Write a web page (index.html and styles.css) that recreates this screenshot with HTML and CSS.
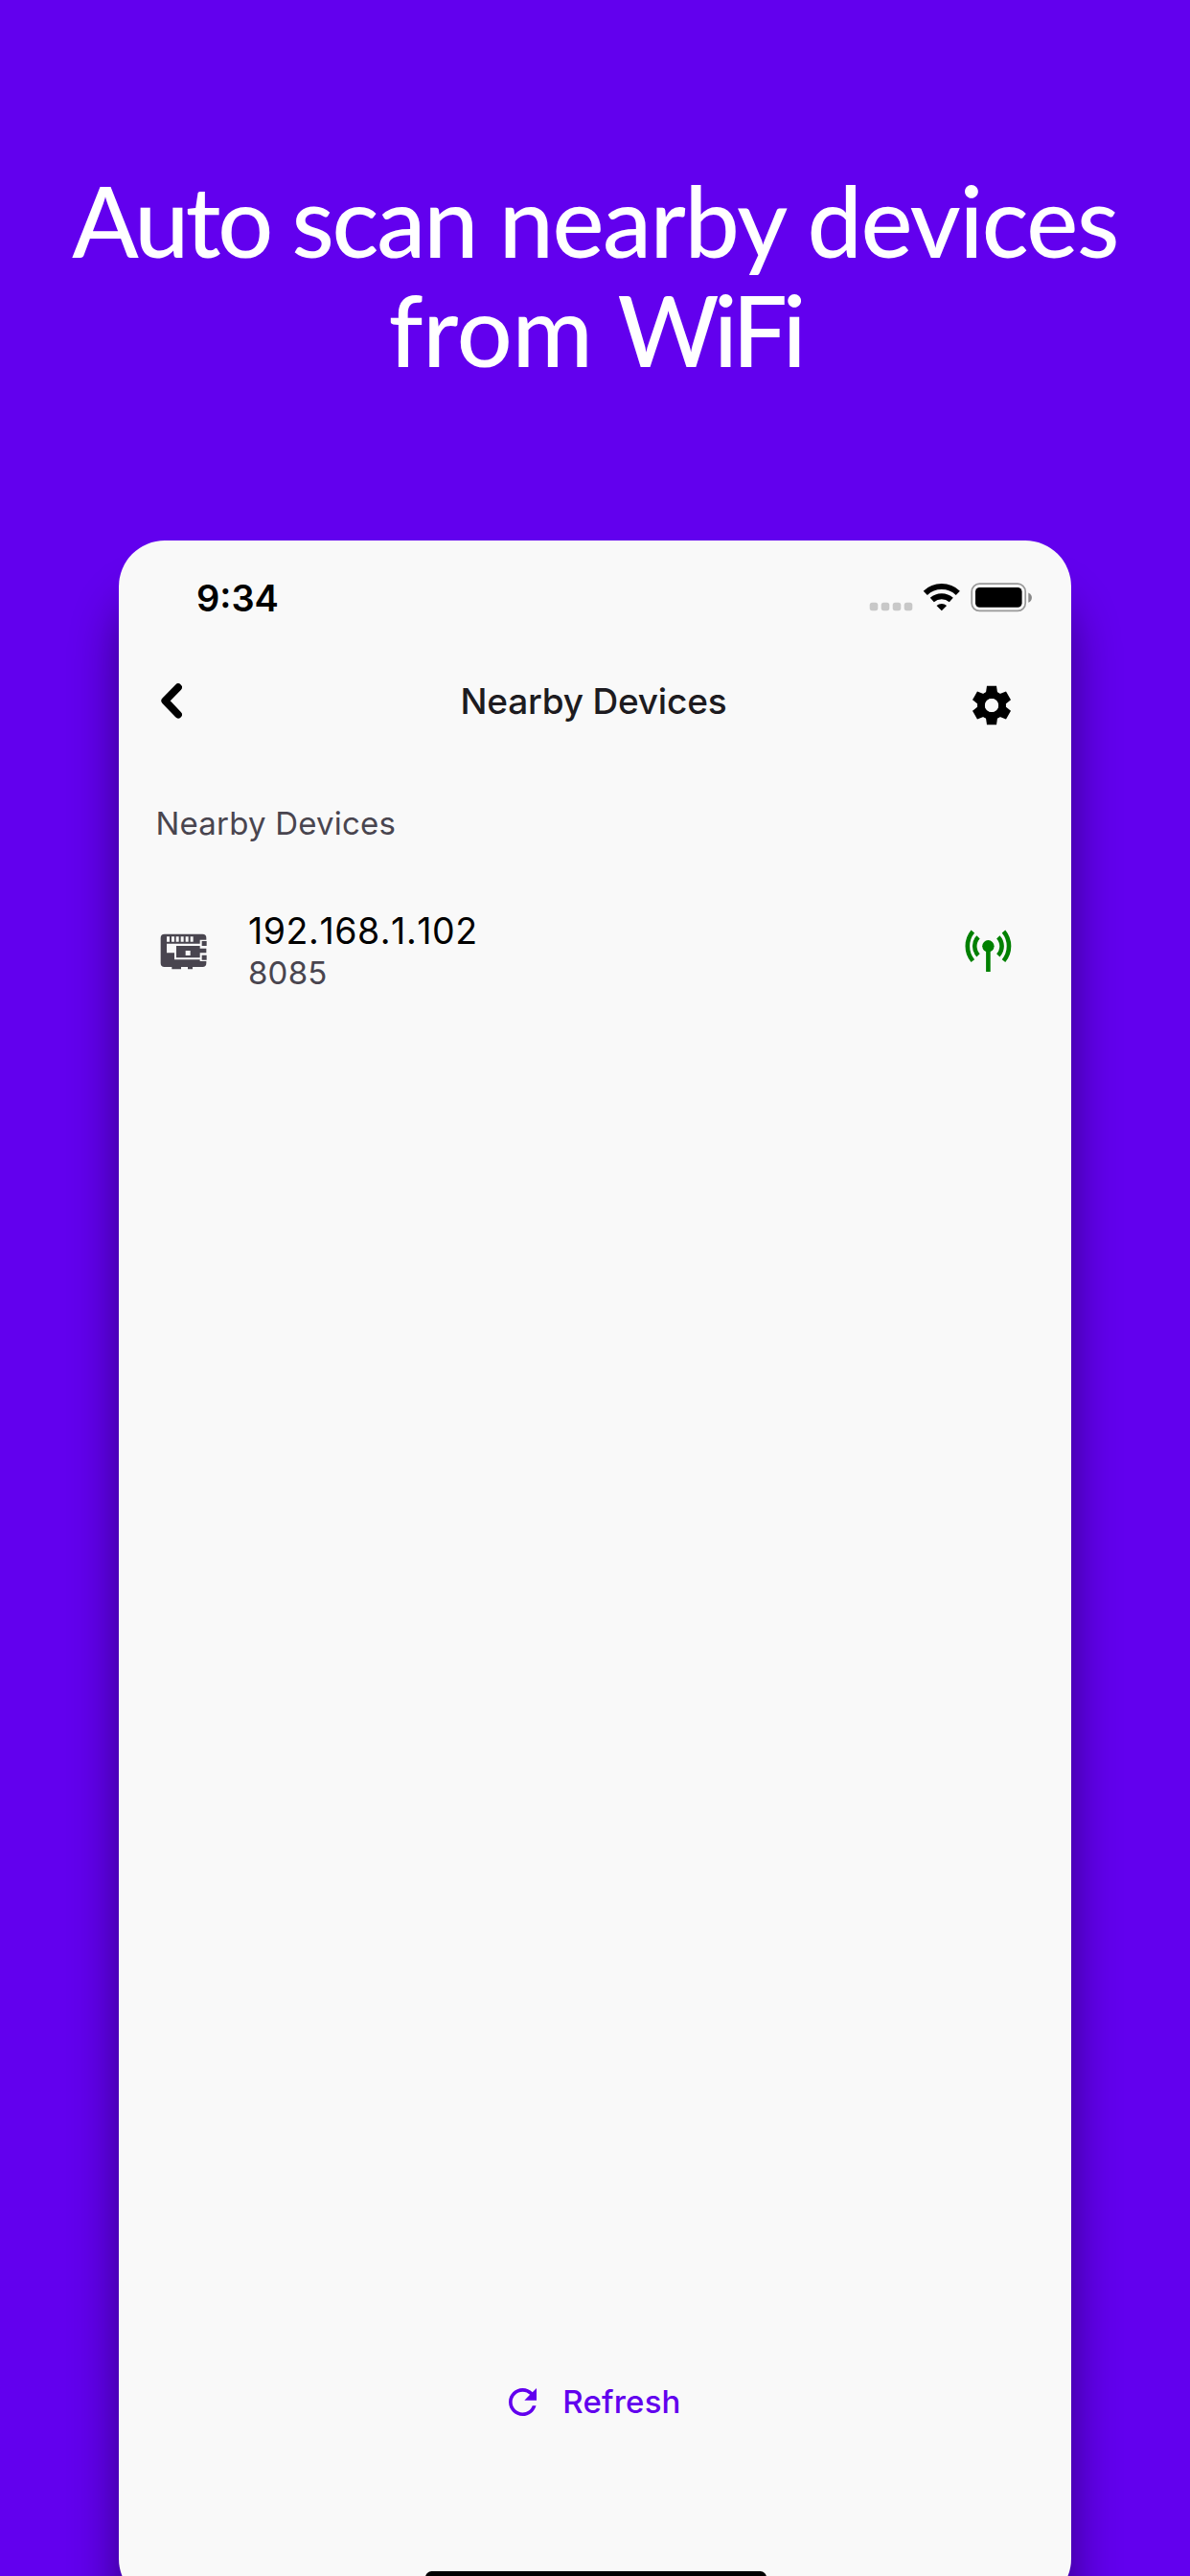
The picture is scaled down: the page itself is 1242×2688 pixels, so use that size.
FILE: index.html
```html
<!DOCTYPE html>
<html lang="en">
<head>
<meta charset="utf-8">
<title>Nearby Devices</title>
<link rel="stylesheet" href="styles.css">
</head>
<body>
<main class="poster">
  <h1 class="headline"><span class="tight">Auto </span><span class="normal">scan </span><span class="wide">nearby devices</span><br><span class="open">from </span><span class="brand">WiFi</span></h1>
  <section class="phone">
    <div class="status">
      <span class="time">9:34</span>
      <svg class="indicators" viewBox="907 606 171 34" aria-hidden="true">
        <g fill="#c8c8c8"><rect x="907.7" y="628.8" width="8.6" height="8.4" rx="2.6"/><rect x="919.7" y="628.8" width="8.6" height="8.4" rx="2.6"/><rect x="931.7" y="628.8" width="8.6" height="8.4" rx="2.6"/><rect x="943.7" y="628.8" width="8.6" height="8.4" rx="2.6"/></g>
        <g fill="none" stroke="#000" stroke-width="6"><path d="M965.8 618.8a24.6 24.6 0 0 1 34 0"/><path d="M972.8 626a15 15 0 0 1 20 0"/></g>
        <path d="M982.8 637.3l-5.3-5.4a8 8 0 0 1 10.6 0z"/>
        <rect x="1014.2" y="609.2" width="56" height="28.2" rx="8" fill="none" stroke="#999" stroke-width="1.7"/>
        <rect x="1018" y="613" width="48.6" height="20.8" rx="4.5"/>
        <path d="M1073.3 618.5c4.8 2 4.8 8.300 0 10.300z" fill="#888"/>
      </svg>
    </div>
    <header class="appbar">
      <svg class="back" viewBox="168 713 22 37" aria-hidden="true"><path d="M186 717.200L172.300 731.300L186 745.600" fill="none" stroke="#000" stroke-width="7.800" stroke-linecap="round" stroke-linejoin="round"/></svg>
      <h2 class="title">Nearby Devices</h2>
      <svg class="gear" viewBox="-21 -21 42 42" aria-hidden="true">
        <defs><path id="tooth" d="M-5-20.200H5L6.500-10H-6.500z"/></defs>
        <use href="#tooth"/><use href="#tooth" transform="rotate(60)"/><use href="#tooth" transform="rotate(120)"/><use href="#tooth" transform="rotate(180)"/><use href="#tooth" transform="rotate(240)"/><use href="#tooth" transform="rotate(300)"/>
        <circle r="11" fill="none" stroke="#000" stroke-width="8"/><circle r="7.100" fill="#f9f9f9"/>
      </svg>
    </header>
    <h3 class="section">Nearby Devices</h3>
    <div class="device">
      <svg class="board" viewBox="51 73 150 114" aria-hidden="true">
        <path fill="#49454f" d="M65 75H184Q196 75 196 87V93H176V105H72V134H96V155H176V160H196V166Q196 178 184 178H153V185H138V178H117V185H88V178H65Q53 178 53 166V87Q53 75 65 75z"/>
        <path fill="#49454f" d="M102 112H176V120H196V134H176V149H102zM182 97H197V112H182zM182 141H197V156H182z"/>
        <path fill="#f9f9f9" d="M72 83h9v16h-9zM87 83h9v16h-9zM101 83h9v16h-9zM116 83h9v16h-9zM131 83h9v16h-9zM146 83h9v16h-9zM131 127h15v15h-15z"/>
      </svg>
      <div class="info"><span class="ip">192.168.1.102</span><span class="port">8085</span></div>
      <svg class="signal" viewBox="1006 969 51 46" aria-hidden="true">
        <g fill="none" stroke="#008000" stroke-width="4.600"><path d="M1015.300 972A24 24 0 0 0 1015.300 1002.600M1047.500 972A24 24 0 0 1 1047.500 1002.600M1021 977.800A13.800 13.800 0 0 0 1021 996.800M1041.800 977.800A13.800 13.800 0 0 1 1041.800 996.800M1031.400 988V1014"/></g>
        <circle cx="1031.400" cy="987.300" r="6.200" fill="#008000"/>
      </svg>
    </div>
    <button class="refresh" type="button">
      <svg viewBox="4 4 16 16" aria-hidden="true"><path fill="#6200ee" d="M17.650 6.350C16.200 4.900 14.210 4 12 4c-4.420 0-7.990 3.580-7.990 8s3.570 8 7.990 8c3.730 0 6.840-2.550 7.730-6h-2.080c-.82 2.330-3.040 4-5.650 4-3.310 0-6-2.690-6-6s2.690-6 6-6c1.660 0 3.140.69 4.220 1.780L13 11h7V4l-2.350 2.350z"/></svg>
      <span>Refresh</span>
    </button>
    <div class="home"></div>
  </section>
</main>
</body>
</html>
```
FILE: styles.css
```css
* { box-sizing: border-box; }
body { margin: 0; background: #6200ee; font-family: Inter, "Liberation Sans", sans-serif; }
.poster { height: 2688px; overflow: hidden; display: flex; flex-direction: column; align-items: center; background: #6200ee; }
.headline { flex: none; margin: 0; height: 564px; padding-top: 173px; font: 500 102px/114px Lato, sans-serif; color: #fff; text-align: center; white-space: nowrap; }
.tight { letter-spacing: -3.3px; }
.normal { letter-spacing: -2.1px; }
.wide { letter-spacing: -1.4px; }
.open { letter-spacing: -.1px; }
.brand { letter-spacing: -5px; }
.phone { flex: none; width: 994px; height: 2154px; border-radius: 48px; background: #f9f9f9; box-shadow: 0 60px 50px rgba(0, 0, 0, .45); display: flex; flex-direction: column; }
.status { height: 118px; display: flex; justify-content: space-between; padding: 36px 40px 0 81px; }
.time { font-size: 38px; line-height: 48px; font-weight: 600; }
.indicators { width: 171px; height: 34px; margin-top: 6px; }
.appbar { height: 100px; display: grid; grid-template-columns: 42px 1fr 42px; align-items: center; padding: 0 62px 0 44px; }
.back { width: 22px; height: 37px; margin-top: -1px; }
.title { margin: 0; padding-left: 15px; text-align: center; font-size: 37px; line-height: 48px; font-weight: 500; letter-spacing: -.2px; color: #1d1b20; }
.gear { width: 42px; height: 42px; margin-top: 7px; }
.section { margin: 57px 0 0 38.500px; font-size: 33px; line-height: 40px; font-weight: 400; letter-spacing: .2px; color: #49454f; }
.device { margin-top: 65px; height: 100px; display: flex; padding: 0 61px 0 43px; }
.board { width: 50px; height: 38px; margin-top: 30px; }
.info { flex: 1; display: flex; flex-direction: column; padding: 6px 0 0 42px; }
.ip { font-size: 37.500px; line-height: 44px; font-kerning: none; letter-spacing: .55px; color: #000; }
.port { font-size: 33px; line-height: 43px; letter-spacing: .2px; color: #49454f; }
.signal { width: 51px; height: 46px; margin-top: 25px; }
.refresh { margin: auto auto 0; display: flex; align-items: center; gap: 27px; padding: 0; border: 0; background: none; font: 500 33px/44px Inter, sans-serif; letter-spacing: .2px; color: #6200ee; }
.refresh svg { width: 29px; height: 29px; }
.home { width: 356px; height: 13px; margin: 155px 0 22px 320px; border-radius: 7px; background: #000; }
```
